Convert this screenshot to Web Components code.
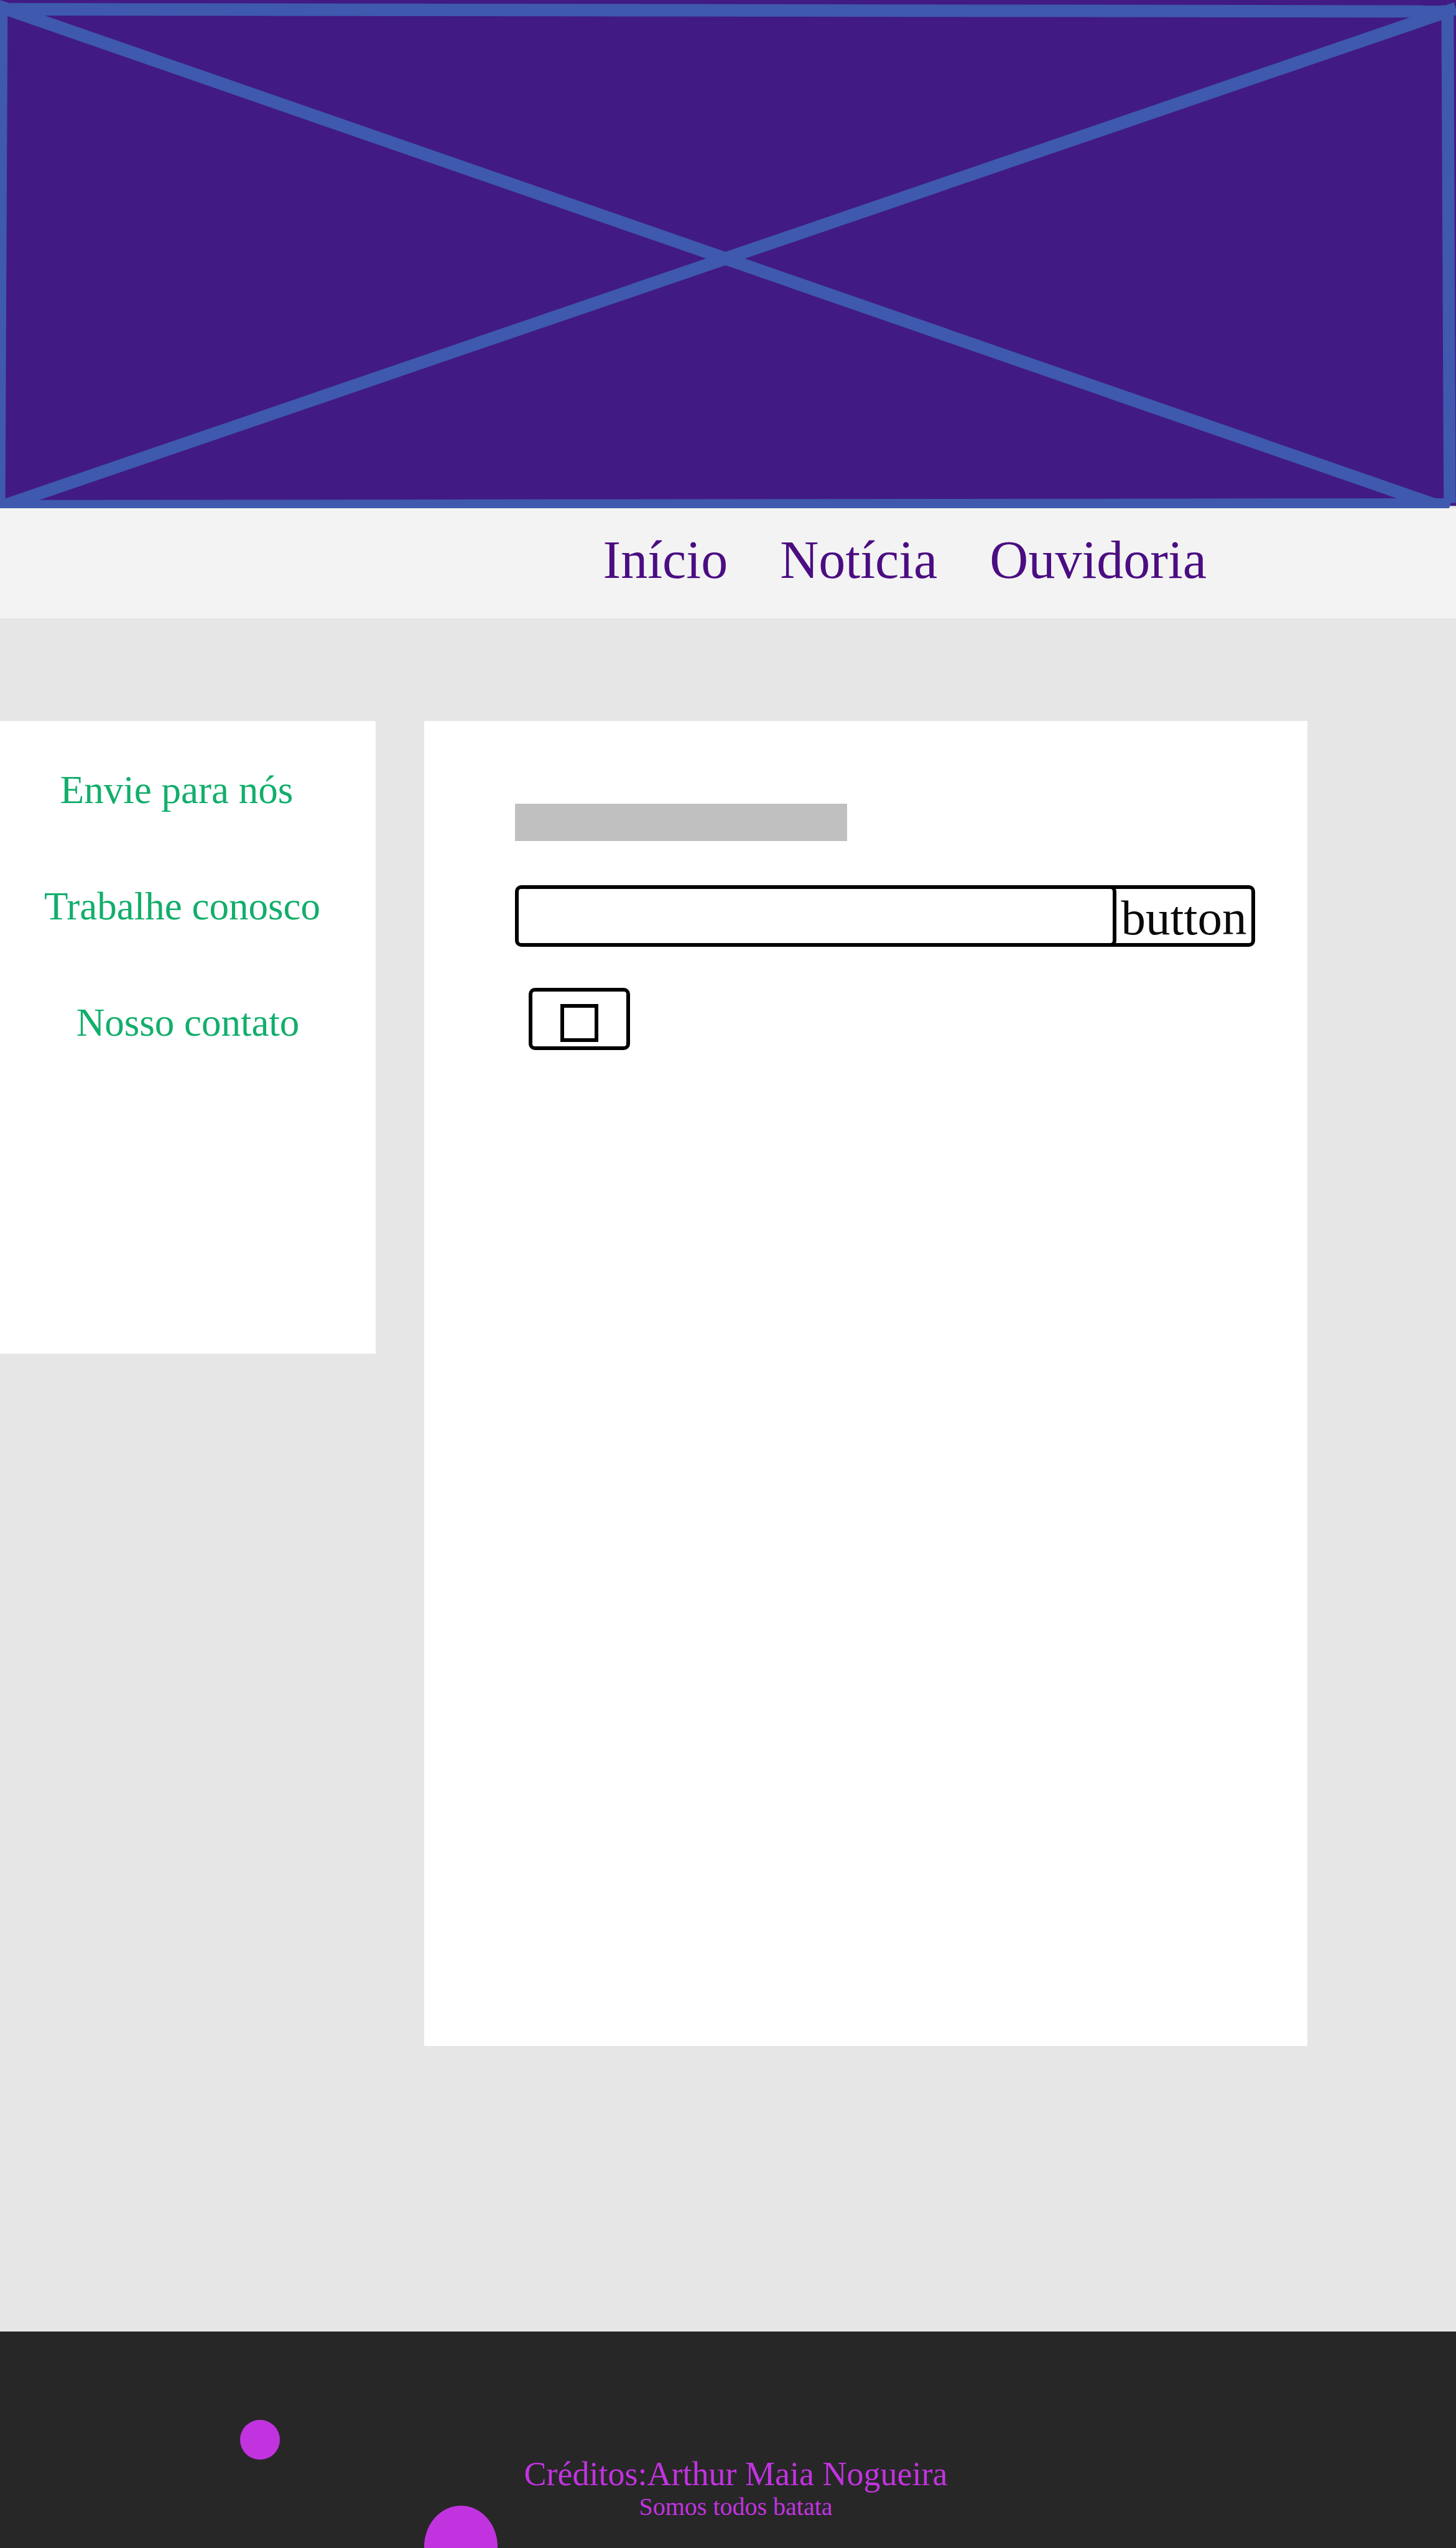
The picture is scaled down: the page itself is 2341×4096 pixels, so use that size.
<!DOCTYPE html>
<html lang="pt-BR">
<head>
<meta charset="utf-8">
<meta name="viewport" content="width=device-width, initial-scale=1">
<title>Início</title>
<style>
body { margin: 0; background: #e6e6e6; font-family: "Liberation Serif", "Times New Roman", serif; }
</style>
</head>
<body>
<site-page>
  <site-banner slot="header"></site-banner>
  <site-nav slot="header"></site-nav>
  <side-menu slot="aside"></side-menu>
  <search-panel slot="main"></search-panel>
  <site-footer slot="footer">
    <span slot="credits">Créditos:Arthur Maia Nogueira</span>
    <span slot="motto">Somos todos batata</span>
  </site-footer>
</site-page>
<script>
const define = (name, html) => customElements.define(name, class extends HTMLElement {
  constructor() {
    super();
    this.attachShadow({ mode: "open" }).innerHTML = html;
  }
});

define("site-banner", `
<style>
:host { display: block; }
svg { display: block; width: 100%; height: 817px; }
</style>
<svg viewBox="0 0 2480 866" preserveAspectRatio="none" aria-hidden="true">
  <rect width="2480" height="866" fill="#e6e6e6"/>
  <rect width="2480" height="862" fill="#421a83"/>
  <g fill="#3e59ad">
    <polygon points="0,5 2463,9 2463,30 0,26.5"/>
    <polygon points="0,5 13,5 13,27 9,866 0,866"/>
    <polygon points="2455,9 2476,9 2479.5,857 2459,857"/>
    <polygon points="0,852 2471,849 2471,858 2468,866 0,866"/>
    <polygon points="0,0 2471,858 2468,866 2428,866 0,23"/>
    <polygon points="0,852.5 2476.5,4 2483,25 0,875"/>
  </g>
</svg>`);

define("site-nav", `
<style>
:host { display: block; background: #f3f3f3; }
nav { display: flex; justify-content: flex-end; gap: 84px; padding: 35px 401px 46px 0; }
a { color: #4b0d82; text-decoration: none; font-size: 86px; line-height: 96px; }
</style>
<nav>
  <a href="#inicio">Início</a>
  <a href="#noticia">Notícia</a>
  <a href="#ouvidoria">Ouvidoria</a>
</nav>`);

define("side-menu", `
<style>
:host { display: block; background: #fff; min-height: 1017px; }
nav { display: flex; flex-direction: column; align-items: center; gap: 115px; padding-top: 75px; }
a { color: #12ae6b; text-decoration: none; font-size: 63px; line-height: 72px; }
a:nth-child(1) { padding-right: 36px; }
a:nth-child(2) { padding-right: 18px; }
</style>
<nav>
  <a href="#envie">Envie para nós</a>
  <a href="#trabalhe">Trabalhe conosco</a>
  <a href="#contato">Nosso contato</a>
</nav>`);

define("search-panel", `
<style>
:host { display: block; box-sizing: border-box; background: #fff; min-height: 2130px; padding: 133px 84px 133px 146px; }
form { display: flex; flex-direction: column; align-items: flex-start; }
.title { width: 534px; max-width: 100%; height: 60px; background: #c0c0c0; }
.row { display: flex; align-self: stretch; height: 99px; margin: 71px 0 66px; }
input, button { box-sizing: border-box; margin: 0; font: inherit; color: #0a0a0a; background: #fff; border: 6px solid #000; border-radius: 10px; }
.field { flex: 1; min-width: 0; padding: 0 16px; font-size: 62px; position: relative; }
button { width: 249px; margin-left: -26px; padding: 6px 0 0 20px; font-size: 79px; line-height: 80px; }
.check { display: flex; justify-content: center; box-sizing: border-box; width: 163px; height: 100px; margin-left: 22px; padding-top: 20px; border: 6px solid #000; border-radius: 10px; }
.check input { appearance: none; width: 61px; height: 61px; border-radius: 0; }
</style>
<form>
  <label class="title" for="field" aria-label="Campo"></label>
  <div class="row">
    <input class="field" id="field" type="text" aria-label="Campo">
    <button type="button">button</button>
  </div>
  <label class="check"><input type="checkbox" aria-label="Opção"></label>
</form>`);

define("site-footer", `
<style>
:host { display: block; position: relative; overflow: hidden; background: #272727; color: #c233e0; text-align: center; padding: 199px 0 43px 25px; }
p { margin: 0; }
.credits { font-size: 54px; line-height: 60px; }
.motto { font-size: 40px; line-height: 46px; }
svg { position: absolute; left: 0; top: 0; width: 1170px; height: 348px; }
</style>
<svg viewBox="0 0 1170 348" aria-hidden="true" fill="#c233e0">
  <circle cx="418" cy="174" r="32"/>
  <ellipse cx="741" cy="346" rx="59" ry="66"/>
</svg>
<p class="credits"><slot name="credits"></slot></p>
<p class="motto"><slot name="motto"></slot></p>`);

define("site-page", `
<style>
:host { display: flex; flex-direction: column; min-height: 100vh; }
.body { flex: 1; display: grid; grid-template-columns: 604fr 1420fr; column-gap: 78px; align-items: start; padding: 165px 239px 459px 0; }
</style>
<header><slot name="header"></slot></header>
<div class="body">
  <aside><slot name="aside"></slot></aside>
  <main><slot name="main"></slot></main>
</div>
<footer><slot name="footer"></slot></footer>`);
</script>
</body>
</html>
